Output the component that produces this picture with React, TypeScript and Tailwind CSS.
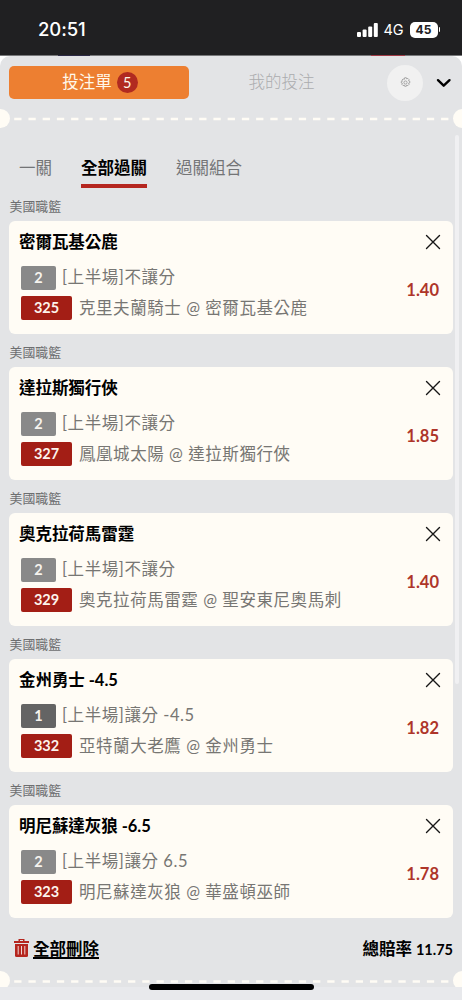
import React from 'react';
import clsx from 'clsx';

interface Bet {
  team: string;
  pick: string;
  market: string;
  code: string;
  match: string;
  odds: string;
}

const bets: Bet[] = [
  { team: '密爾瓦基公鹿', pick: '2', market: '[上半場]不讓分', code: '325', match: '克里夫蘭騎士 @ 密爾瓦基公鹿', odds: '1.40' },
  { team: '達拉斯獨行俠', pick: '2', market: '[上半場]不讓分', code: '327', match: '鳳凰城太陽 @ 達拉斯獨行俠', odds: '1.85' },
  { team: '奧克拉荷馬雷霆', pick: '2', market: '[上半場]不讓分', code: '329', match: '奧克拉荷馬雷霆 @ 聖安東尼奧馬刺', odds: '1.40' },
  { team: '金州勇士 -4.5', pick: '1', market: '[上半場]讓分 -4.5', code: '332', match: '亞特蘭大老鷹 @ 金州勇士', odds: '1.82' },
  { team: '明尼蘇達灰狼 -6.5', pick: '2', market: '[上半場]讓分 6.5', code: '323', match: '明尼蘇達灰狼 @ 華盛頓巫師', odds: '1.78' },
];

function StatusBar() {
  return (
    <div className="flex h-[55px] shrink-0 items-center justify-between bg-[#202022] pt-1 pr-[22px] pl-[38px] font-['Inter',sans-serif] text-white">
      <span className="text-[18.5px] font-medium tracking-[-0.1px]">20:51</span>
      <div className="flex items-center">
        <svg width="21" height="14" viewBox="0 0 21 14" fill="currentColor">
          <rect x="0" y="9" width="4" height="5" rx="1" />
          <rect x="5.6" y="6.5" width="4" height="7.5" rx="1" />
          <rect x="11.2" y="3.5" width="4" height="10.5" rx="1" />
          <rect x="16.8" y="0" width="4" height="14" rx="1" />
        </svg>
        <span className="ml-[5.5px] w-[21px] text-[14.5px]">4G</span>
        <span className="ml-[5px] flex h-[16px] w-[28px] items-center justify-center rounded-[5px] bg-white text-[12px] font-bold text-[#202022]">45</span>
        <span className="ml-px h-[5px] w-[1.5px] rounded-r-full bg-white" />
      </div>
    </div>
  );
}

// Perforated ticket edge with a notch on both sides
function TicketEdge({ bottom = false }: { bottom?: boolean }) {
  return (
    <div className={clsx('flex shrink-0 justify-between overflow-hidden', bottom ? 'h-4' : 'h-[19px]')}>
      <span className="-ml-[9.5px] h-[19px] w-[19px] shrink-0 rounded-full bg-[#fffcf5]" />
      <svg width="444" height="19" viewBox="0 0 444 19" className="-mx-[0.5px] shrink-0">
        <line x1="5.2" y1={bottom ? 10.5 : 10} x2="440" y2={bottom ? 10.5 : 10} stroke="#fffcf5" strokeWidth="2.4" strokeDasharray="7.3 6.93" />
      </svg>
      <span className="-mr-[9.5px] h-[19px] w-[19px] shrink-0 rounded-full bg-[#fffcf5]" />
    </div>
  );
}

function Header() {
  return (
    <div className="flex h-[53px] shrink-0 items-center pl-[9px]">
      <button className="flex h-[33px] w-[180px] items-center justify-center gap-[5px] rounded-[5px] bg-[#ed7f31] pl-[2px] text-[#fff8ea]">
        <span className="text-[16.5px]">投注單</span>
        <span className="flex h-[21px] w-[21px] items-center justify-center rounded-full bg-[#b12a20] text-[14.5px]">5</span>
      </button>
      <button className="w-[185px] text-[16.5px] font-light text-[#abacae]">我的投注</button>
      <span className="ml-[13px] flex h-9 w-9 items-center justify-center rounded-full bg-[#f1f1f1]">
        <svg width="11" height="11" viewBox="0 0 22 22" fill="none" stroke="#8f8f8f" strokeWidth="1.5" strokeLinejoin="round">
          <path d="M9.300 1.500h3.400l.7 2.300 2.300-1 2.400 2.400-1 2.300 2.400.8v3.400l-2.400.8 1 2.300-2.400 2.400-2.300-1-.7 2.300H9.300l-.8-2.300-2.300 1-2.400-2.400 1-2.300-2.300-.8V9.300l2.300-.8-1-2.300 2.400-2.400 2.300 1z" />
          <circle cx="11" cy="11" r="3.2" />
        </svg>
      </span>
      <svg className="ml-[13px]" width="16" height="10" viewBox="0 0 16 10" fill="none" stroke="#000" strokeWidth="2.4" strokeLinecap="round" strokeLinejoin="round">
        <path d="M2 2.2l5.7 5.5L13.500 2.200" />
      </svg>
    </div>
  );
}

function BetCard({ bet }: { bet: Bet }) {
  return (
    <div className="h-[146px]">
      <div className="flex h-[25px] items-center pl-[0.5px] text-[12.9px] leading-[19px] text-[#6d6e70]">
        <span className="-mt-[5px]">美國職籃</span>
      </div>
      <div className="flex h-[113px] justify-between rounded-[6px] bg-[#fffcf5] pt-[9px] pr-[12px] pl-[10px]">
        <div className="flex flex-col">
          <h3 className="h-6 text-[16.5px] leading-6 font-bold tracking-[-0.05px] text-black">{bet.team}</h3>
          <div className="mt-[12px] ml-[2px] flex h-6 items-center">
            <span className={clsx('flex h-6 w-[35px] items-center justify-center rounded-[2px] text-[14.5px] font-bold text-[#f6f3ee]', bet.pick === '1' ? 'bg-[#646464]' : 'bg-[#898989]')}>
              {bet.pick}
            </span>
            <span className="-mt-[2px] ml-[6px] text-[16.5px] leading-6 tracking-[0.56px] text-[#777673]">{bet.market}</span>
          </div>
          <div className="mt-[6px] ml-[2px] flex h-6 items-center">
            <span className="flex h-6 w-[51px] items-center justify-center rounded-[2px] bg-[#a31e15] text-[14.5px] font-bold text-[#fdf3ec]">{bet.code}</span>
            <span className="ml-[7px] text-[16.5px] leading-6 tracking-[0.56px] text-[#777673]">{bet.match}</span>
          </div>
        </div>
        <div className="flex flex-col items-end">
          <svg className="mt-[4px]" width="16" height="16" viewBox="0 0 16 16" stroke="#161616" strokeWidth="1.4" strokeLinecap="round">
            <path d="M1.5 1.5l13 13M14.5 1.5l-13 13" />
          </svg>
          <span className="mt-[28px] mr-[2px] text-[16.5px] leading-6 font-bold text-[#ae3529]">{bet.odds}</span>
        </div>
      </div>
    </div>
  );
}

export default function App() {
  return (
    <div className="relative flex h-[1000px] w-[462px] flex-col overflow-hidden bg-white font-['Lato','Noto_Sans_CJK_TC',sans-serif]">
      <StatusBar />
      {/* Sliver of the page behind the sheet */}
      <div className="flex h-px shrink-0 bg-[#77787a]">
        <span className="ml-[58px] w-[32px] bg-[#2c2a45]" />
        <span className="ml-[281px] w-[34px] bg-[#a03a45]" />
      </div>
      <div className="flex flex-1 flex-col rounded-t-[10px] bg-[#e3e4e6]">
        <Header />
        <TicketEdge />
        <div className="flex h-[68px] shrink-0 items-end gap-[29px] pb-[8px] pl-[19px] text-[16.5px] leading-6 text-[#737476]">
          <span className="h-[32px]">一關</span>
          <span className="h-[32px] border-b-[4px] border-[#b5261f] font-bold text-black">全部過關</span>
          <span className="h-[32px]">過關組合</span>
        </div>
        <div className="h-[730px] shrink-0 px-[9px]">
          {bets.map((bet) => (
            <BetCard key={bet.code} bet={bet} />
          ))}
        </div>
        <div className="flex h-[45px] shrink-0 items-center justify-between pt-[2px] pr-[9px] pl-[14px] text-[16.5px] font-bold text-black">
          <button className="flex items-center gap-[5px]">
            <svg className="-mt-[3px]" width="15" height="18" viewBox="0 0 15 18" fill="#b5261f">
              <path d="M4.5 0h6v2H15v2H0V2h4.5zM6 1v1h3V1z" fillRule="evenodd" />
              <path d="M1 5h13v11.5q0 1.5-1.5 1.5h-10Q1 18 1 16.5z" />
              <path d="M4.2 7v8.5M7.5 7v8.5M10.8 7v8.5" stroke="#f0d4d2" strokeWidth="1" />
            </svg>
            <span className="-ml-px underline decoration-[1.5px] underline-offset-2">全部刪除</span>
          </button>
          <span>總賠率 <span className="text-[14.5px]">11.75</span></span>
        </div>
        <TicketEdge bottom />
        <div className="flex-1 bg-[#e8e9ec]" />
      </div>
      <div className="absolute top-[135px] left-[455px] h-[549px] w-[3.5px] rounded-full bg-[#f0f0f2]" />
      <div className="absolute top-[984px] left-[149px] h-[6px] w-[165px] rounded-full bg-black" />
    </div>
  );
}
